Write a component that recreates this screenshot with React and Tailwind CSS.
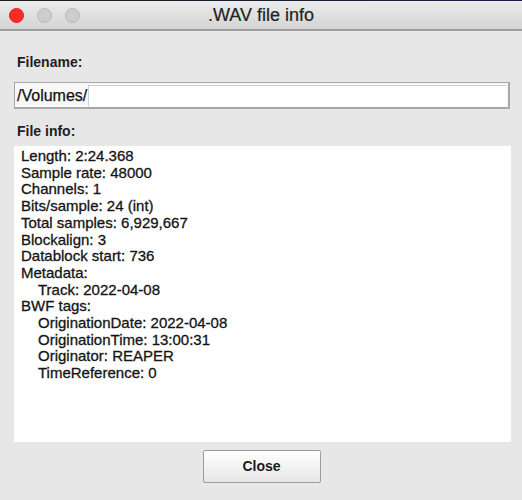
import React from "react";

const lines = [
  { t: "Length: 2:24.368" },
  { t: "Sample rate: 48000" },
  { t: "Channels: 1" },
  { t: "Bits/sample: 24 (int)" },
  { t: "Total samples: 6,929,667" },
  { t: "Blockalign: 3" },
  { t: "Datablock start: 736" },
  { t: "Metadata:" },
  { t: "Track: 2022-04-08", i: true },
  { t: "BWF tags:" },
  { t: "OriginationDate: 2022-04-08", i: true },
  { t: "OriginationTime: 13:00:31", i: true },
  { t: "Originator: REAPER", i: true },
  { t: "TimeReference: 0", i: true },
];

export default function App() {
  return (
    <div
      className="w-[522px] h-[500px] bg-[#e7e7e7] flex flex-col overflow-hidden"
      style={{ fontFamily: '"Liberation Sans", Arial, sans-serif' }}
    >
      <div className="h-[1px] bg-gradient-to-r from-[#1c1c1c] to-[#1c1f4a]" />
      <div className="relative h-[30px] bg-gradient-to-b from-[#ececec] to-[#d4d4d4] border-b-[2px] border-[#9d9d9d] flex items-center pl-[9px] gap-[13px] shrink-0">
        <span className="w-[15px] h-[15px] rounded-full bg-[#fc2b2b] border border-[#dc2222]" />
        <span className="w-[15px] h-[15px] rounded-full bg-[#cdcdcd] border border-[#b9b9b9]" />
        <span className="w-[15px] h-[15px] rounded-full bg-[#cdcdcd] border border-[#b9b9b9]" />
        <div className="absolute inset-0 flex items-center justify-center text-[18px] text-[#222] [-webkit-text-stroke:0.2px_#222] pointer-events-none">
          .WAV file info
        </div>
      </div>

      <div className="flex flex-col px-[14px] pt-[23px]">
        <div className="pl-[3px] text-[14px] leading-[16px] font-bold text-[#1e1e1e]">Filename:</div>
        <div className="mt-[12px] w-[496px] h-[27px] bg-[#f8f8f8] border border-[#a8a8a8] border-r-[2px] border-b-[2px] flex items-stretch pt-[2px] pr-[2px] pb-[1px]">
          <span className="pl-[2px] pr-[1px] text-[16px] leading-[20px] text-[#111] [-webkit-text-stroke:0.25px_#111] self-center">/Volumes/</span>
          <span className="flex-1 bg-white border-t border-l border-[#cfcfcf]" />
        </div>
        <div className="mt-[14px] pl-[3px] text-[14px] leading-[16px] font-bold text-[#1e1e1e]">File info:</div>
        <div className="mt-[7px] w-[497px] h-[296px] bg-white pt-[2px] pl-[7px]">
          {lines.map((l, k) => (
            <div
              key={k}
              className={
                l.i
                  ? "pl-[17px] text-[15px] leading-[16.7px] text-[#141414] [-webkit-text-stroke:0.3px_#141414] whitespace-nowrap"
                  : "text-[15px] leading-[16.7px] text-[#141414] [-webkit-text-stroke:0.3px_#141414] whitespace-nowrap"
              }
            >
              {l.t}
            </div>
          ))}
        </div>
        <div className="mt-[8px] flex justify-center pl-[1px]">
          <button className="w-[118px] h-[33px] bg-gradient-to-b from-[#ffffff] to-[#e6e6e6] border border-[#9c9c9c] rounded-[2px] text-[14px] font-bold text-[#1a1a1a]">
            Close
          </button>
        </div>
      </div>
    </div>
  );
}
